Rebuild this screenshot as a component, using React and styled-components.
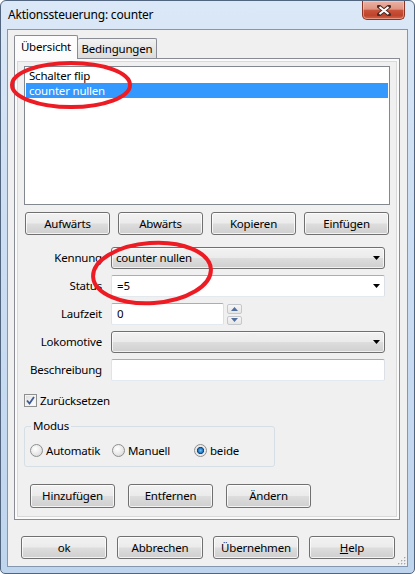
import React from "react";
import styled, { createGlobalStyle, css } from "styled-components";

const GlobalStyle = createGlobalStyle`
  html, body {
    margin: 0;
    padding: 0;
    background: #ffffff;
  }
  body {
    font-family: "Segoe UI", "Noto Sans", "Open Sans", sans-serif;
    font-size: 11.5px;
    letter-spacing: -0.2px;
    color: #000;
  }
  * {
    box-sizing: border-box;
  }
`;

const Window = styled.div`
  position: relative;
  width: 415px;
  height: 574px;
  display: flex;
  flex-direction: column;
  border: 1px solid #52657f;
  border-radius: 6px 6px 5px 5px;
  background: linear-gradient(180deg, #dbe8f7 0%, #cfe0f4 30%, #bfd5ee 100%);
`;

const TitleBar = styled.div`
  height: 28px;
  flex-shrink: 0;
  display: flex;
  justify-content: space-between;
  align-items: flex-start;
  padding-left: 7px;
`;

const Title = styled.span`
  margin-top: 6px;
  font-size: 12px;
  line-height: 16px;
`;

const CloseButton = styled.div`
  width: 43px;
  height: 19px;
  margin-right: 9px;
  display: flex;
  align-items: center;
  justify-content: center;
  border: 1px solid #8a3426;
  border-top: none;
  border-radius: 0 0 5px 5px;
  background: linear-gradient(
    180deg,
    #eab3a5 0%,
    #e09380 45%,
    #c9533b 52%,
    #c0432b 80%,
    #d3674c 100%
  );
  box-shadow: inset 0 0 0 1px rgba(255, 220, 210, 0.45);
`;

const Client = styled.div`
  position: relative;
  flex: 1;
  margin: 0 6px 6px;
  border: 1px solid #8496b0;
  background: #f0f0f0;
  padding: 5px 0 0 6px;
  display: flex;
  flex-direction: column;
`;

const TabStrip = styled.div`
  position: relative;
  z-index: 1;
  height: 23px;
  display: flex;
  align-items: flex-end;
`;

const Tab = styled.div`
  display: flex;
  align-items: center;
  justify-content: center;
  border: 1px solid #898c95;
  border-bottom: none;
  border-radius: 2px 2px 0 0;
  white-space: nowrap;
  ${(p) =>
    p.active
      ? css`
          width: 64px;
          height: 24px;
          margin-bottom: -1px;
          padding-bottom: 2px;
          background: #fcfcfc;
        `
      : css`
          width: 79px;
          height: 20px;
          border-left: none;
          background: linear-gradient(180deg, #f2f2f2 0%, #e6e6e6 50%, #dcdcdc 100%);
        `}
`;

const Panel = styled.div`
  width: 386px;
  height: 462px;
  border: 1px solid #898c95;
  background: #f0f0f0;
  box-shadow: inset 0 0 0 2px #fbfbfb, inset 0 0 0 3px #d9d9d9;
  padding: 7px 9px;
  display: flex;
  flex-direction: column;
`;

const ListBox = styled.div`
  width: 366px;
  height: 139px;
  border: 1px solid #828790;
  background: #fff;
  padding: 1px;
`;

const ListItem = styled.div`
  height: 15px;
  line-height: 15px;
  padding-left: 3px;
  ${(p) =>
    p.selected &&
    css`
      background: #3399ff;
      color: #fff;
    `}
`;

const ButtonRow = styled.div`
  display: grid;
  grid-template-columns: repeat(${(p) => p.count}, ${(p) => p.width}px);
  column-gap: ${(p) => p.gap}px;
  margin-top: ${(p) => p.top}px;
  padding-left: ${(p) => p.left}px;
`;

const Button = styled.div`
  height: ${(p) => p.height || 23}px;
  display: flex;
  align-items: center;
  justify-content: center;
  border: 1px solid #707070;
  border-radius: 3px;
  background: linear-gradient(180deg, #f2f2f2 0%, #ebebeb 48%, #dddddd 52%, #cfcfcf 100%);
  box-shadow: inset 0 0 0 1px rgba(255, 255, 255, 0.75);
  padding-bottom: 1px;
`;

const FormGrid = styled.div`
  display: grid;
  grid-template-columns: 78px 274px;
  grid-auto-rows: 22px;
  column-gap: 9px;
  row-gap: 6px;
  margin-top: 12px;
`;

const Label = styled.span`
  justify-self: end;
  align-self: center;
  padding-bottom: 1px;
`;

const Combo = styled.div`
  display: flex;
  align-items: center;
  justify-content: space-between;
  padding: 0 4px 1px 4px;
  ${(p) =>
    p.editable
      ? css`
          padding-left: 5px;
          background: #fff;
          border: 1px solid;
          border-color: #abadb3 #dbdfe6 #e3e9ef #e2e3ea;
          border-radius: 2px;
        `
      : css`
          border: 1px solid #707070;
          border-radius: 3px;
          background: linear-gradient(180deg, #f2f2f2 0%, #ebebeb 48%, #dddddd 52%, #cfcfcf 100%);
          box-shadow: inset 0 0 0 1px rgba(255, 255, 255, 0.7);
        `}
`;

const TextBox = styled.div`
  width: ${(p) => (p.width ? `${p.width}px` : "auto")};
  height: 100%;
  display: flex;
  align-items: center;
  padding: 0 5px 1px;
  background: #fff;
  border: 1px solid;
  border-color: #abadb3 #dbdfe6 #e3e9ef #e2e3ea;
  border-radius: 2px;
`;

const FieldRow = styled.div`
  display: flex;
  gap: 3px;
`;

const Spinner = styled.div`
  display: flex;
  flex-direction: column;
  gap: 2px;
  padding-top: 1px;
`;

const SpinButton = styled.div`
  width: 15px;
  height: 10px;
  display: flex;
  align-items: center;
  justify-content: center;
  border: 1px solid #c4c7cc;
  border-radius: 2px;
  background: linear-gradient(180deg, #f6f6f6 0%, #e6e6e6 100%);
`;

const CheckRow = styled.label`
  display: flex;
  align-items: center;
  gap: 3px;
  height: 13px;
  margin-top: 13px;
`;

const CheckBox = styled.span`
  width: 13px;
  height: 13px;
  display: flex;
  align-items: center;
  justify-content: center;
  border: 1px solid #8e8f8f;
  background: linear-gradient(135deg, #dcdcdc 0%, #f4f4f4 60%, #ffffff 100%);
  box-shadow: inset 0 0 0 1px #f4f4f4;
`;

const GroupBox = styled.fieldset`
  width: 251px;
  margin: 11px 0 0 0;
  padding: 0 0 8px 5px;
  border: 1px solid #d5dfe5;
  border-radius: 3px;
  min-width: 0;
`;

const Legend = styled.legend`
  margin-left: 1px;
  padding: 0 2px;
  line-height: 16px;
`;

const RadioRow = styled.div`
  display: grid;
  grid-template-columns: repeat(3, 82px);
  margin-top: 8px;
  height: 16px;
`;

const RadioItem = styled.label`
  display: flex;
  align-items: center;
  gap: 3px;
`;

const Radio = styled.span`
  width: 13px;
  height: 13px;
  border-radius: 50%;
  border: 1px solid #8e8f8f;
  background: radial-gradient(circle at 40% 35%, #ffffff 0%, #e8e8e8 55%, #cfcfcf 100%);
  ${(p) =>
    p.checked &&
    css`
      background: radial-gradient(
        circle at 50% 50%,
        #6fc3f7 0%,
        #2c87d0 25%,
        #123f70 42%,
        #e6e6e6 50%,
        #f8f8f8 100%
      );
    `}
`;

const Overlay = styled.svg`
  position: absolute;
  top: -1px;
  left: -1px;
  pointer-events: none;
`;

const Grip = styled.svg`
  position: absolute;
  right: 1px;
  bottom: 1px;
`;

const Arrow = ({ color = "#000" }) => (
  <svg width="7" height="4" viewBox="0 0 7 4">
    <polygon points="0,0 7,0 3.5,4" fill={color} />
  </svg>
);

const SmallArrow = ({ up }) => (
  <svg width="7" height="4" viewBox="0 0 7 4">
    <polygon points={up ? "0,4 7,4 3.5,0" : "0,0 7,0 3.5,4"} fill="#4f6f9f" />
  </svg>
);

const App = () => {
  return (
    <>
      <GlobalStyle />
      <Window>
        <TitleBar>
          <Title>Aktionssteuerung: counter</Title>
          <CloseButton>
            <svg width="14" height="11" viewBox="0 0 14 11">
              <path d="M2 1.5 L12 9.5 M12 1.5 L2 9.5" stroke="#4a2a26" strokeWidth="4" strokeLinecap="round" />
              <path d="M2.5 2 L11.5 9 M11.5 2 L2.5 9" stroke="#ffffff" strokeWidth="2.2" />
            </svg>
          </CloseButton>
        </TitleBar>

        <Client>
          <TabStrip>
            <Tab active>Übersicht</Tab>
            <Tab>Bedingungen</Tab>
          </TabStrip>

          <Panel>
            <ListBox>
              <ListItem>Schalter flip</ListItem>
              <ListItem selected>counter nullen</ListItem>
            </ListBox>

            <ButtonRow count={4} width={85} gap={8} top={7} left={1}>
              <Button>Aufwärts</Button>
              <Button>Abwärts</Button>
              <Button>Kopieren</Button>
              <Button>Einfügen</Button>
            </ButtonRow>

            <FormGrid>
              <Label>Kennung</Label>
              <Combo>
                <span>counter nullen</span>
                <Arrow />
              </Combo>

              <Label>Status</Label>
              <Combo editable>
                <span>=5</span>
                <Arrow />
              </Combo>

              <Label>Laufzeit</Label>
              <FieldRow>
                <TextBox width={113}>0</TextBox>
                <Spinner>
                  <SpinButton>
                    <SmallArrow up />
                  </SpinButton>
                  <SpinButton>
                    <SmallArrow />
                  </SpinButton>
                </Spinner>
              </FieldRow>

              <Label>Lokomotive</Label>
              <Combo>
                <span />
                <Arrow />
              </Combo>

              <Label>Beschreibung</Label>
              <TextBox />
            </FormGrid>

            <CheckRow>
              <CheckBox>
                <svg width="9" height="9" viewBox="0 0 9 9">
                  <path d="M1 4.5 L3.5 7.5 L8 1" fill="none" stroke="#3d5a95" strokeWidth="1.8" />
                </svg>
              </CheckBox>
              Zurücksetzen
            </CheckRow>

            <GroupBox>
              <Legend>Modus</Legend>
              <RadioRow>
                <RadioItem>
                  <Radio />
                  Automatik
                </RadioItem>
                <RadioItem>
                  <Radio />
                  Manuell
                </RadioItem>
                <RadioItem>
                  <Radio checked />
                  beide
                </RadioItem>
              </RadioRow>
            </GroupBox>

            <ButtonRow count={3} width={85} gap={13} top={17} left={6}>
              <Button height={24}>Hinzufügen</Button>
              <Button height={24}>Entfernen</Button>
              <Button height={24}>Ändern</Button>
            </ButtonRow>
          </Panel>

          <ButtonRow count={4} width={86} gap={10} top={16} left={7}>
            <Button>ok</Button>
            <Button>Abbrechen</Button>
            <Button>Übernehmen</Button>
            <Button>
              <span>
                <u>H</u>elp
              </span>
            </Button>
          </ButtonRow>

          <Grip width="9" height="9" viewBox="0 0 9 9">
            {[
              [7, 1],
              [4, 4],
              [7, 4],
              [1, 7],
              [4, 7],
              [7, 7],
            ].map(([x, y]) => (
              <g key={`${x}-${y}`}>
                <rect x={x + 0.6} y={y + 0.6} width="1.4" height="1.4" fill="#ffffff" />
                <rect x={x} y={y} width="1.4" height="1.4" fill="#a2a6ab" />
              </g>
            ))}
          </Grip>
        </Client>

        <Overlay width="415" height="574" viewBox="0 0 415 574">
          <ellipse cx="71" cy="85" rx="59" ry="22" fill="none" stroke="#ed1c24" strokeWidth="4" />
          <ellipse
            cx="152"
            cy="273"
            rx="59"
            ry="30"
            fill="none"
            stroke="#ed1c24"
            strokeWidth="4"
            transform="rotate(-4 152 273)"
          />
        </Overlay>
      </Window>
    </>
  );
};

export default App;
